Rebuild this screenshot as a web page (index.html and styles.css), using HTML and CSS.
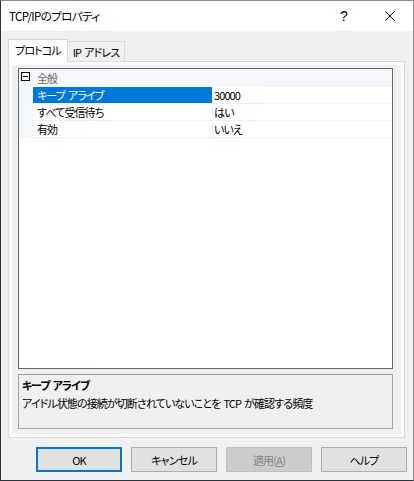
FILE: index.html
```html
<!DOCTYPE html>
<html lang="ja">
<head>
  <meta charset="UTF-8">
  <title>TCP/IPのプロパティ</title>
  <link rel="stylesheet" href="styles.css">
</head>
<body>
  <div class="window">
    <div class="titlebar">
      <span class="title">TCP/IPのプロパティ</span>
      <div class="caption-buttons">
        <span class="caption-btn help">?</span>
        <span class="caption-btn close">
          <svg width="10" height="10" viewBox="0 0 10 10">
            <path d="M0.5 0.5 L9.5 9.5 M9.5 0.5 L0.5 9.5" stroke="#000" stroke-width="1" fill="none"/>
          </svg>
        </span>
      </div>
    </div>

    <div class="client">
      <div class="tabs">
        <div class="tab active">プロトコル</div>
        <div class="tab">IP アドレス</div>
      </div>

      <div class="tab-panel">
        <div class="propgrid">
          <div class="grid-view">
            <div class="row category">
              <div class="gutter"><span class="collapse-box"></span></div>
              <div class="cat-label">全般</div>
            </div>
            <div class="row selected">
              <div class="gutter"></div>
              <div class="name">キープ アライブ</div>
              <div class="value">30000</div>
            </div>
            <div class="row">
              <div class="gutter"></div>
              <div class="name">すべて受信待ち</div>
              <div class="value">はい</div>
            </div>
            <div class="row">
              <div class="gutter"></div>
              <div class="name">有効</div>
              <div class="value">いいえ</div>
            </div>
          </div>

          <div class="description">
            <div class="desc-title">キープ アライブ</div>
            <div class="desc-text">アイドル状態の接続が切断されていないことを TCP が確認する頻度</div>
          </div>
        </div>
      </div>

      <div class="buttons">
        <button class="default">OK</button>
        <button>キャンセル</button>
        <button disabled>適用(<u>A</u>)</button>
        <button>ヘルプ</button>
      </div>
    </div>
  </div>
</body>
</html>
```

FILE: styles.css
```css
* {
  margin: 0;
  padding: 0;
  box-sizing: border-box;
}

body {
  font-family: "Noto Sans CJK JP", "Noto Sans", sans-serif;
  font-feature-settings: "palt" 1;
  font-size: 11px;
  letter-spacing: -0.9px;
  word-spacing: 1.5px;
  color: #000;
  background: #f0f0f0;
}

.window {
  width: 414px;
  height: 481px;
  border: 1px solid #8a8a8a;
  border-left-color: #2b3440;
  border-bottom-color: #2b3440;
  display: flex;
  flex-direction: column;
  background: #f0f0f0;
}

/* title bar */
.titlebar {
  height: 30px;
  background: #fff;
  display: flex;
  align-items: center;
  justify-content: space-between;
}

.title {
  font-size: 11.5px;
  letter-spacing: -0.6px;
  line-height: 16px;
  padding-left: 8px;
}

.caption-buttons {
  display: flex;
  height: 100%;
}

.caption-btn {
  width: 46px;
  height: 100%;
  display: flex;
  align-items: center;
  justify-content: center;
}

.help {
  font-family: "Liberation Sans", sans-serif;
  font-size: 14px;
  letter-spacing: 0;
}

/* client area */
.client {
  flex: 1;
  padding: 8px 6px 0 7px;
  display: flex;
  flex-direction: column;
}

.tabs {
  display: flex;
  align-items: flex-end;
  height: 23px;
  margin-bottom: -1px;
  position: relative;
  z-index: 1;
}

.tab {
  height: 20px;
  width: 58px;
  margin-left: -1px;
  margin-bottom: 1px;
  border: 1px solid #d9d9d9;
  border-bottom: none;
  background: #f0f0f0;
  text-align: center;
  line-height: 18px;
  padding-top: 1px;
}

.tab.active {
  height: 23px;
  width: 60px;
  margin-left: 0;
  margin-bottom: 0;
  background: #fff;
  position: relative;
  z-index: 2;
  line-height: 20px;
  padding-top: 0;
}

.tab-panel {
  width: 397px;
  height: 377px;
  border: 1px solid #d9d9d9;
  background: #fff;
  padding: 3px;
}

.propgrid {
  height: 100%;
  background: #f0f0f0;
  padding: 3px 8px 5px 6px;
  display: flex;
  flex-direction: column;
  gap: 5px;
}

.grid-view {
  height: 301px;
  border: 1px solid #646464;
  background: #fff;
}

.row {
  display: flex;
  height: 17px;
}

.row .gutter {
  width: 14px;
  background: #f4f7fc;
  flex-shrink: 0;
}

.row .name,
.row .value {
  border-bottom: 1px solid #f0f0f0;
  line-height: 16px;
  white-space: nowrap;
}

.row .name {
  width: 179px;
  padding-left: 4px;
}

.row .value {
  flex: 1;
  border-left: 1px solid #f0f0f0;
  padding-left: 1px;
}

.row.selected .name {
  background: #0078d7;
  color: #fff;
}

.row.category {
  height: 18px;
  background: #f4f7fc;
}

.cat-label {
  padding-left: 4px;
  line-height: 18px;
  color: #6d6d6d;
}

.collapse-box {
  display: block;
  width: 9px;
  height: 9px;
  margin: 3px 0 0 2px;
  border: 1px solid #000;
  position: relative;
  background: #fff;
}

.collapse-box::after {
  content: '';
  position: absolute;
  left: 1px;
  top: 3px;
  width: 5px;
  height: 1px;
  background: #000;
}

.description {
  height: 55px;
  border: 1px solid #a0a0a0;
  padding: 2px 3px;
}

.desc-title {
  font-weight: bold;
  line-height: 16px;
}

.desc-text {
  line-height: 18px;
  margin-top: 1px;
}

/* dialog buttons */
.buttons {
  display: flex;
  justify-content: flex-end;
  gap: 9px;
  margin-top: 9px;
}

button {
  font-family: inherit;
  font-feature-settings: "palt" 1;
  font-size: 11px;
  letter-spacing: -0.8px;
  width: 86px;
  height: 25px;
  background: #e1e1e1;
  border: 1px solid #adadad;
  color: #000;
}

button.default {
  border: 2px solid #0078d7;
}

button:disabled {
  background: #cccccc;
  border-color: #bfbfbf;
  color: #838383;
}
```
